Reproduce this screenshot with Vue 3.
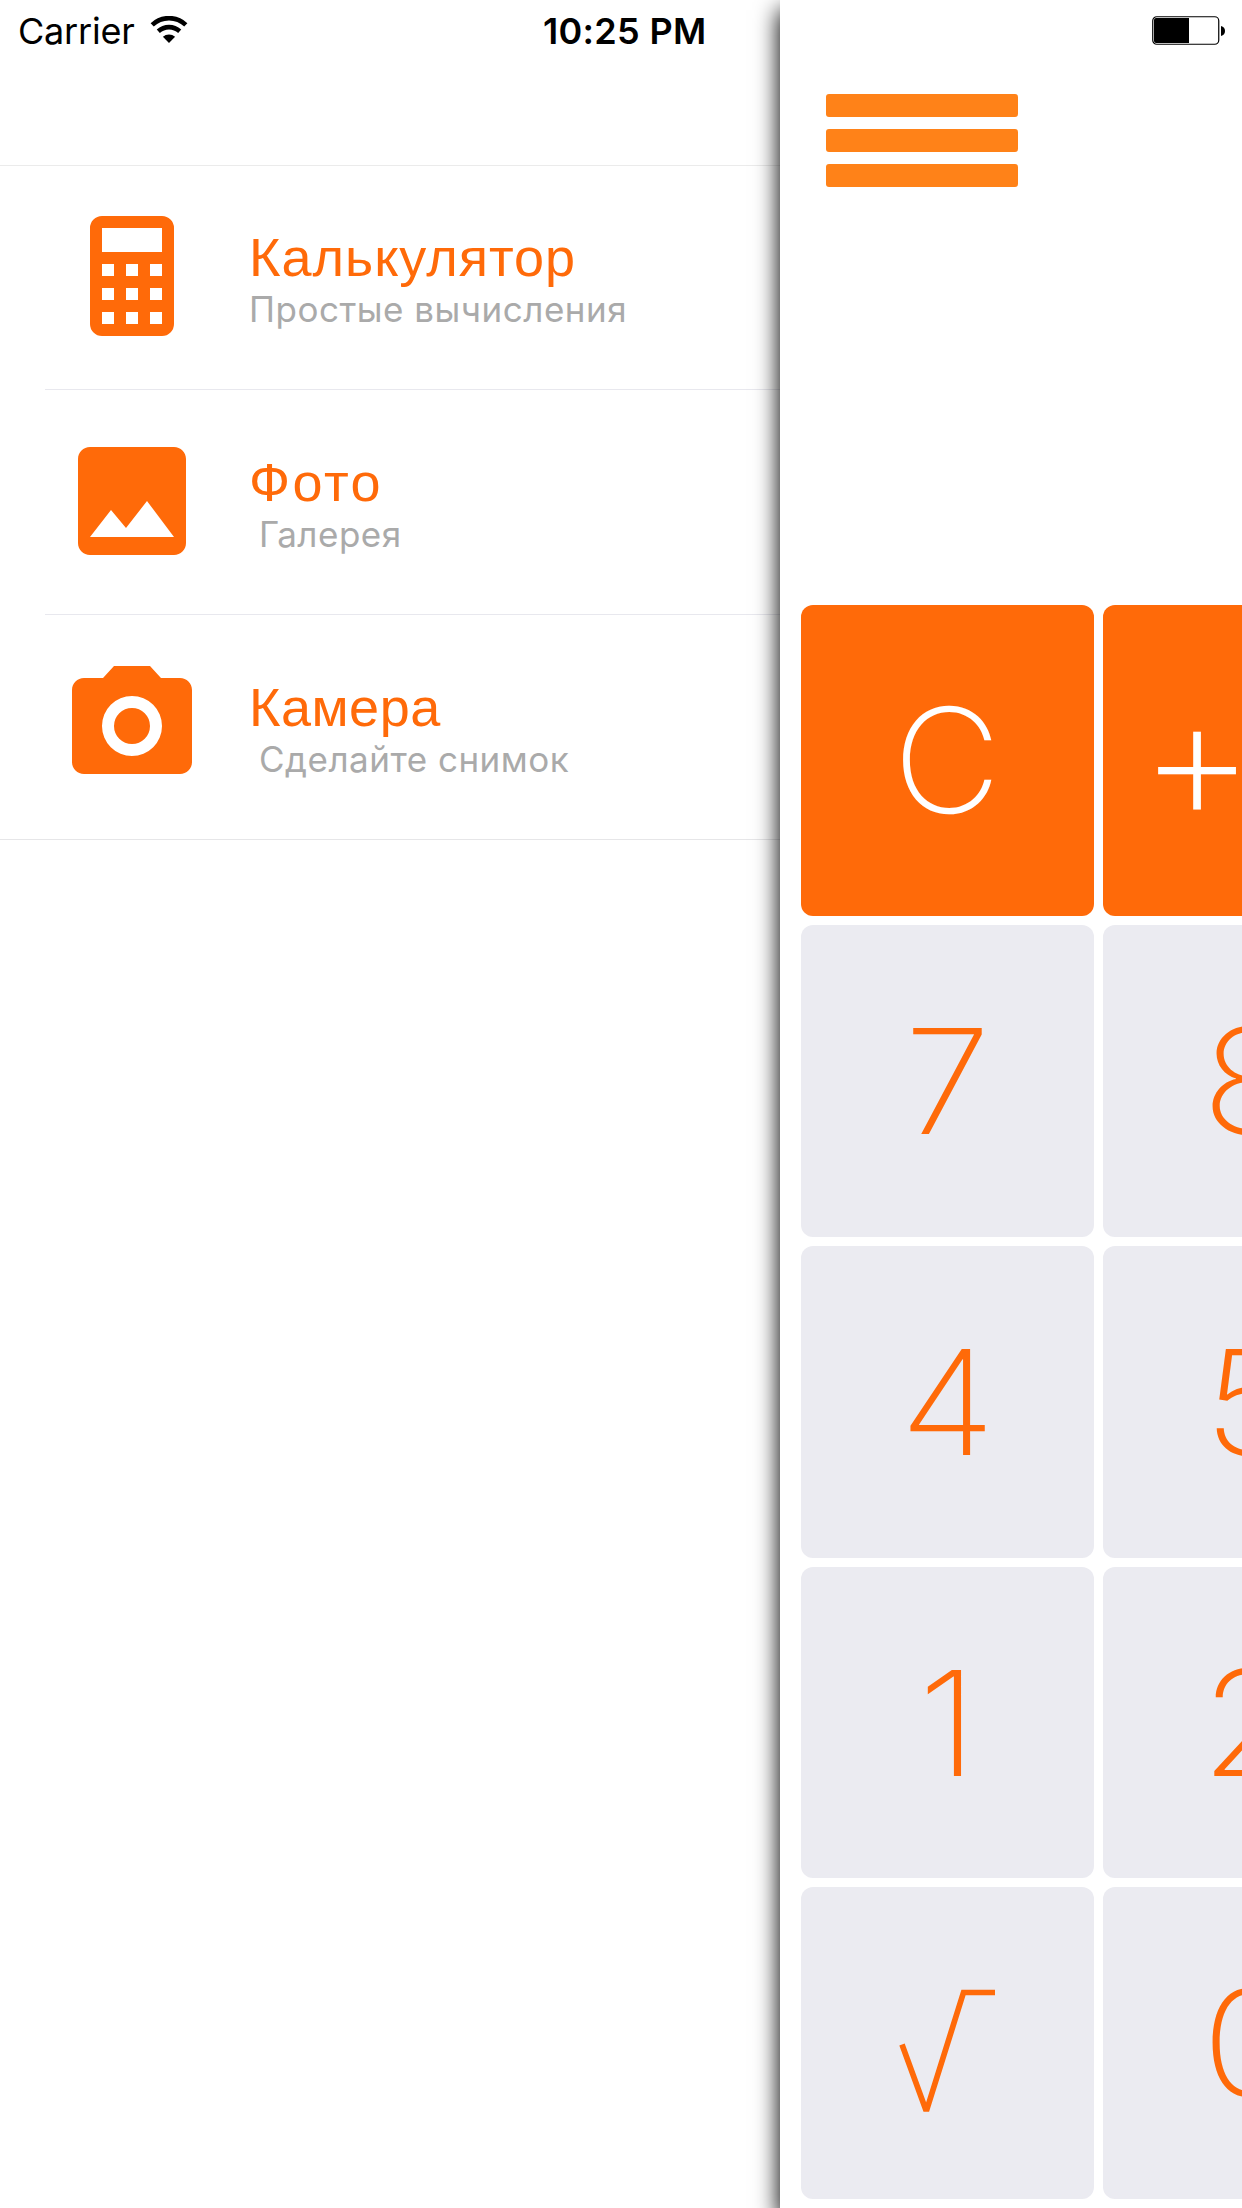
<script setup>
const items = [
  { id: 'calc', title: 'Калькулятор', note: 'Простые вычисления' },
  { id: 'photo', title: 'Фото', note: 'Галерея', indent: true },
  { id: 'camera', title: 'Камера', note: 'Сделайте снимок', indent: true },
]
const keys = [
  { label: 'C', accent: true },
  { label: '+/-', accent: true, sign: true },
  { label: '7' }, { label: '8' },
  { label: '4' }, { label: '5' },
  { label: '1' }, { label: '2' },
  { label: '√', root: true }, { label: '0' },
]
</script>

<template>
  <div class="screen">
    <header class="status">
      <div class="status-left">
        <span class="carrier">Carrier</span>
        <svg class="wifi" width="38" height="28" viewBox="0 0 38 28">
          <path d="M2.2 8.8A24.5 24.5 0 0 1 35.8 8.8" fill="none" stroke="#000" stroke-width="4.6" />
          <path d="M8.3 15.2A16 16 0 0 1 29.7 15.2" fill="none" stroke="#000" stroke-width="4.6" />
          <path d="M12.9 20.8A9 9 0 0 1 25.1 20.8L19 27Z" />
        </svg>
      </div>
      <span class="time">10:25 PM</span>
      <svg class="battery" width="74" height="30" viewBox="0 0 74 30">
        <rect x="0.75" y="0.75" width="66" height="27.5" rx="4" fill="#fff" stroke="#000" stroke-width="1.2" />
        <path d="M4 2H37V27H4A2 2 0 0 1 2 25V4A2 2 0 0 1 4 2Z" />
        <path d="M69 10Q73 11 73 15T69 20Z" />
      </svg>
    </header>

    <nav class="menu">
      <ul class="list">
        <li v-for="item in items" :key="item.id" class="item" :class="item.id">
          <svg class="icon" viewBox="0 0 24 24" width="144" height="144" fill="#ff6a09">
            <path
              v-if="item.id === 'calc'"
              fill-rule="evenodd"
              d="M7 2H17A2 2 0 0 1 19 4V20A2 2 0 0 1 17 22H7A2 2 0 0 1 5 20V4A2 2 0 0 1 7 2ZM7 4V8H17V4ZM7 10V12H9V10ZM11 10V12H13V10ZM15 10V12H17V10ZM7 14V16H9V14ZM11 14V16H13V14ZM15 14V16H17V14ZM7 18V20H9V18ZM11 18V20H13V18ZM15 18V20H17V18Z"
            />
            <path
              v-else-if="item.id === 'photo'"
              d="M21 19V5c0-1.1-.9-2-2-2H5c-1.1 0-2 .9-2 2v14c0 1.1.9 2 2 2h14c1.1 0 2-.9 2-2zM8.5 13.5l2.5 3.01L14.5 12l4.5 6H5l3.5-4.5z"
            />
            <path
              v-else
              fill-rule="evenodd"
              d="M9 2L7.17 4H4c-1.1 0-2 .9-2 2v12c0 1.1.9 2 2 2h16c1.1 0 2-.9 2-2V6c0-1.1-.9-2-2-2h-3.17L15 2H9zM12 7a5 5 0 1 1 0 10 5 5 0 0 1 0-10zM12 9a3 3 0 1 0 0 6 3 3 0 0 0 0-6z"
            />
          </svg>
          <div class="texts">
            <span class="title">{{ item.title }}</span>
            <span class="note" :class="{ indent: item.indent }">{{ item.note }}</span>
          </div>
        </li>
      </ul>
    </nav>

    <main class="panel">
      <button class="burger" aria-label="Menu"><i></i><i></i><i></i></button>
      <div class="keys">
        <button v-for="key in keys" :key="key.label" class="key" :class="{ accent: key.accent }">
          <svg v-if="key.root" class="root" width="98" height="124" viewBox="0 0 98 124" aria-label="√">
            <path d="M3 55.5L26.5 120H28L64.5 3.5H96" fill="none" stroke="#ff6a09" stroke-width="5.7" />
          </svg>
          <span v-else-if="key.sign"><span class="plus">+</span>/-</span>
          <span v-else class="glyph">{{ key.label }}</span>
        </button>
      </div>
    </main>
  </div>
</template>

<style>
body {
  margin: 0;
  background: #fff;
}
</style>

<style scoped>
.screen {
  position: relative;
  display: grid;
  grid-template-columns: 780px 462px;
  width: 1242px;
  height: 2208px;
  overflow: hidden;
  background: #fff;
  font-family: Inter, "Liberation Sans", sans-serif;
}
.status {
  position: absolute;
  z-index: 3;
  inset: 0 0 auto 0;
  height: 62px;
  display: flex;
  align-items: center;
  justify-content: space-between;
  box-sizing: border-box;
  padding: 0 16px 0 18px;
  font-size: 36px;
  line-height: 44px;
  color: #000;
}
.status-left {
  display: flex;
  width: 525px;
  gap: 15px;
}
.carrier { letter-spacing: -0.2px; }
.wifi { margin-top: 7px; }
.time {
  flex: 1;
  font-weight: 600;
  letter-spacing: 0.3px;
}
.menu {
  padding-top: 165px;
}
.list {
  list-style: none;
  margin: 0;
  padding: 0;
  border-top: 1px solid #ebebeb;
  border-bottom: 1px solid #e6e6e8;
}
.item {
  display: flex;
  align-items: flex-start;
  height: 223px;
  margin-left: 45px;
  padding: 38px 0 0 15px;
  box-sizing: border-box;
}
.item + .item {
  height: 225px;
  padding-top: 39px;
  border-top: 1px solid #e8e8ee;
}
.texts {
  display: flex;
  flex-direction: column;
  padding: 21px 0 0 45px;
  white-space: nowrap;
}
.title {
  font-family: "Liberation Sans", Arial, sans-serif;
  font-size: 54px;
  line-height: 64px;
  letter-spacing: 1px;
  color: #ff6a09;
}
.photo .title { letter-spacing: 2.5px; }
.camera .title { letter-spacing: 0.5px; }
.note {
  margin-top: -1px;
  font-size: 35px;
  line-height: 42px;
  color: #aaa;
  letter-spacing: 0.5px;
}
.indent { padding-left: 10px; }
.panel {
  position: relative;
  display: flex;
  flex-direction: column;
  background: #fff;
  box-shadow: 0 11px 22px 1px #000;
}
.burger {
  display: flex;
  flex-direction: column;
  gap: 12.5px;
  width: 192px;
  margin: 94px 0 0 46px;
  padding: 0;
  border: 0;
  background: none;
}
.burger i {
  height: 22.5px;
  border-radius: 3px;
  background: #ff8218;
}
.keys {
  display: grid;
  grid-template-columns: 293px 293px;
  grid-template-rows: 311px 312px 312px 311px 312px;
  gap: 9px;
  margin: 418.5px 0 0 21px;
}
.key {
  display: flex;
  align-items: center;
  justify-content: center;
  padding: 0;
  border: 0;
  border-radius: 12px;
  background: #ebebf1;
  color: #ff6a09;
  font-family: Inter, sans-serif;
  font-size: 146px;
  font-weight: 200;
  line-height: 1;
  white-space: nowrap;
}
.accent {
  background: #ff6a09;
  color: #fff;
}
.glyph { transform: scaleX(1.07); }
.accent .glyph { transform: translate(-1px, -1px) scaleX(1.02); }
.plus {
  position: relative;
  top: 8px;
  margin-right: -9px;
  font-size: 180px;
  font-weight: 200;
  line-height: 0;
}
.root { margin-top: 16px; }
</style>
